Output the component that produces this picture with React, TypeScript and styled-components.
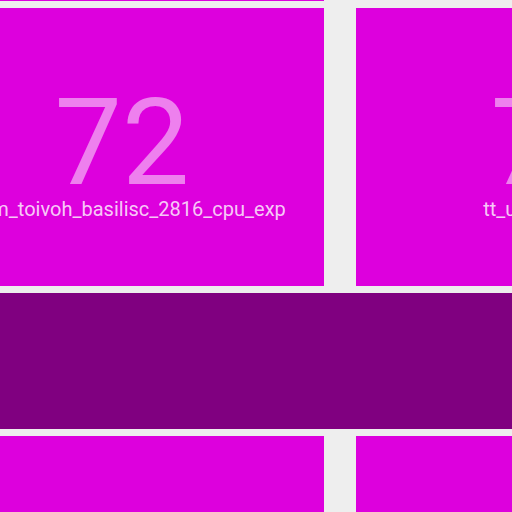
import React from 'react';
import styled, { createGlobalStyle } from 'styled-components';

const GlobalStyle = createGlobalStyle`
  html, body {
    margin: 0;
    padding: 0;
    overflow: hidden;
    background: #eeeeee;
    font-family: Roboto, "Liberation Sans", Arial, sans-serif;
  }
`;

const Board = styled.div`
  display: grid;
  grid-template-columns: repeat(3, 404px);
  column-gap: 32px;
  row-gap: 7px;
  margin-left: -80px;
  margin-top: -277.4px;
`;

const Tile = styled.div<{ $blank?: boolean }>`
  box-sizing: border-box;
  height: 278px;
  padding-top: 10px;
  background: ${p => (p.$blank ? 'transparent' : '#dd00dd')};
  display: flex;
  flex-direction: column;
  align-items: center;
  justify-content: center;
  overflow: hidden;
  color: white;
`;

const Score = styled.div`
  font-size: 120px;
  line-height: 1;
  font-weight: 400;
  color: rgba(255, 255, 255, 0.5);
`;

const Name = styled.div`
  margin-top: -6px;
  font-size: 20px;
  color: rgba(255, 255, 255, 0.8);
  white-space: nowrap;
`;

const Detail = styled.div`
  grid-column: 1 / -1;
  height: 136px;
  background: #800080;
`;

type Entry = { score: number; name: string };

const top: (Entry | null)[] = [
  { score: 81, name: 'tt_um_factory_test' },
  null,
  null,
];

const row: Entry[] = [
  { score: 72, name: 'tt_um_toivoh_basilisc_2816_cpu_exp' },
  { score: 71, name: 'tt_um_urish_sic1' },
  { score: 70, name: 'tt_um_rejunity_vga' },
];

const next: Entry[] = [
  { score: 69, name: 'tt_um_algofoogle_raybox' },
  { score: 68, name: 'tt_um_wokwi_project' },
  { score: 67, name: 'tt_um_chip_rom' },
];

const Cell: React.FC<{ entry: Entry | null }> = ({ entry }) =>
  entry ? (
    <Tile>
      <Score>{entry.score}</Score>
      <Name>{entry.name}</Name>
    </Tile>
  ) : (
    <Tile $blank />
  );

export default function App() {
  return (
    <>
      <GlobalStyle />
      <Board>
        {top.map((e, i) => (
          <Cell key={`t${i}`} entry={e} />
        ))}
        {row.map((e, i) => (
          <Cell key={`r${i}`} entry={e} />
        ))}
        <Detail />
        {next.map((e, i) => (
          <Cell key={`n${i}`} entry={e} />
        ))}
      </Board>
    </>
  );
}
